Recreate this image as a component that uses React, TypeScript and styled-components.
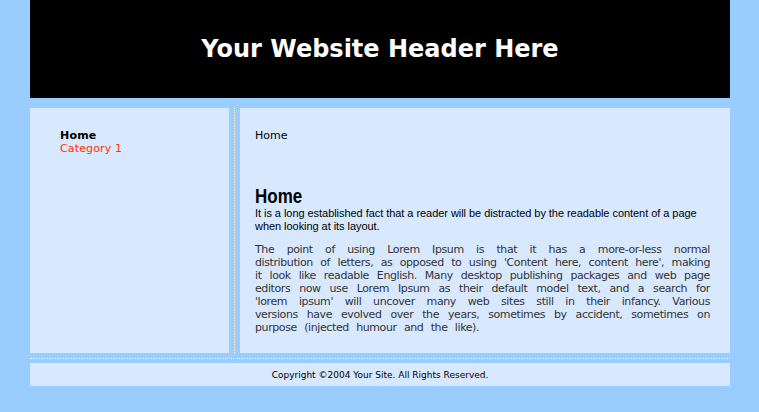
import {ReactElement} from "react";
import styled, {createGlobalStyle} from "styled-components";

const GlobalStyle = createGlobalStyle`
    html, body {
        margin: 0;
        padding: 0;
        background: #99ccff;
    }
`

const StyledPage = styled.div`
    width: 700px;
    margin: 0 30px;
    font-family: "DejaVu Sans", Verdana, sans-serif;
`

const StyledHeader = styled.header`
    height: 98px;
    background: #000;
    display: flex;
    align-items: center;
    justify-content: center;
    margin-bottom: 10px;
`

const StyledTitle = styled.h1`
    margin: 0;
    color: #fff;
    font-size: 24px;
    font-weight: bold;
`

const StyledColumns = styled.div`
    display: flex;
    height: 245px;
`

const StyledSidebar = styled.nav`
    width: 199px;
    background: #d8e8ff;
    padding: 21px 30px;
    box-sizing: border-box;
    font-size: 11px;
    line-height: 13px;
`

const NavLink = styled.a<{ active?: boolean }>`
    display: block;
    text-decoration: none;
    color: ${props => props.active ? "#000" : "#ff3300"};
    font-weight: ${props => props.active ? "bold" : "normal"};
    letter-spacing: ${props => props.active ? "0.2px" : "0.15px"};
`

const VerticalRule = styled.div`
    width: 0;
    margin: 0 5px;
    border-left: 1px dotted #fff;
`

const StyledContent = styled.main`
    flex: 1;
    background: #d8e8ff;
    padding: 21px 20px 0 15px;
    box-sizing: border-box;
`

const Breadcrumb = styled.div`
    font-size: 11px;
    line-height: 13px;
    color: #000;
    margin-bottom: 43px;
`

const Heading = styled.h2`
    margin: 0;
    font-family: "Liberation Sans", Arial, sans-serif;
    font-size: 20px;
    line-height: 22px;
    color: #000;
    transform: scaleX(0.85);
    transform-origin: left center;
`

const Lead = styled.p`
    margin: 0 0 10px;
    font-family: "Liberation Sans", Arial, sans-serif;
    font-size: 11px;
    line-height: 13px;
    letter-spacing: -0.05px;
    color: #000;
`

// spacing tuned so the lines wrap where the original's Verdana wraps
const BodyText = styled.p`
    margin: 0;
    font-size: 11px;
    line-height: 13px;
    letter-spacing: -0.4px;
    word-spacing: 4.2px;
    color: #333;
    text-align: justify;
`

const HorizontalRule = styled.div`
    margin: 5px 0 4px;
    border-top: 1px dotted #fff;
`

const StyledFooter = styled.footer`
    height: 23px;
    background: #d8e8ff;
    display: flex;
    align-items: center;
    justify-content: center;
    font-size: 9px;
    color: #000;
`

const App = (): ReactElement => {
    return (
        <>
            <GlobalStyle/>
            <StyledPage>
                <StyledHeader>
                    <StyledTitle>Your Website Header Here</StyledTitle>
                </StyledHeader>
                <StyledColumns>
                    <StyledSidebar>
                        <NavLink href="#" active>Home</NavLink>
                        <NavLink href="#">Category 1</NavLink>
                    </StyledSidebar>
                    <VerticalRule/>
                    <StyledContent>
                        <Breadcrumb>Home</Breadcrumb>
                        <Heading>Home</Heading>
                        <Lead>
                            It is a long established fact that a reader will be distracted by the readable content of a page
                            when looking at its layout.
                        </Lead>
                        <BodyText>
                            The point of using Lorem Ipsum is that it has a more-or-less normal distribution of letters,
                            as opposed to using 'Content here, content here', making it look like readable English. Many
                            desktop publishing packages and web page editors now use Lorem Ipsum as their default model
                            text, and a search for 'lorem ipsum' will uncover many web sites still in their infancy.
                            Various versions have evolved over the years, sometimes by accident, sometimes on purpose
                            (injected humour and the like).
                        </BodyText>
                    </StyledContent>
                </StyledColumns>
                <HorizontalRule/>
                <StyledFooter>Copyright ©2004 Your Site. All Rights Reserved.</StyledFooter>
            </StyledPage>
        </>
    )
}

export default App;
